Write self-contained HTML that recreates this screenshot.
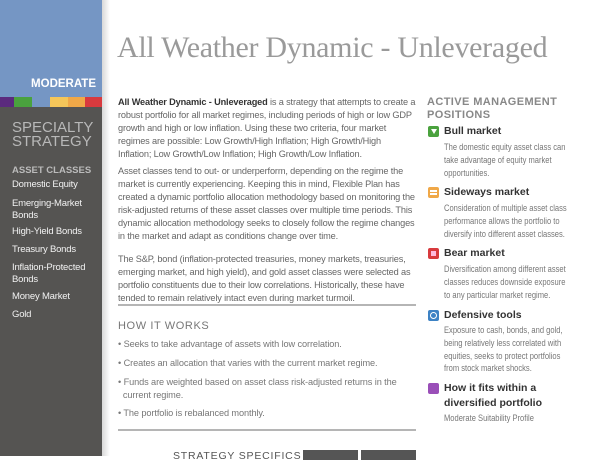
<!DOCTYPE html>
<html><head><meta charset="utf-8"><style>
*{margin:0;padding:0;box-sizing:border-box}
body{width:600px;height:456px;overflow:hidden;background:#fff;position:relative;font-family:"Liberation Sans",sans-serif}
.abs{position:absolute}
#side{left:0;top:0;width:102px;height:456px;background:#555452}
#blue{left:0;top:0;width:102px;height:97px;background:#7596c4}
#shadow{left:102px;top:0;width:8px;height:456px;background:linear-gradient(to right,#d8d8d8,#fff)}
.bar{top:97px;height:10px}
.si{left:12px;color:#f2f2f2;font-size:9.5px;line-height:12px;letter-spacing:-0.2px}
.p{left:118px;width:298px;font-size:9.2px;line-height:13px;color:#666;letter-spacing:-0.15px}
.p b{color:#333}
.rule{left:118px;width:298px;height:2px;background:#b5b5b5}
.r{left:444px;white-space:nowrap;font-size:9px;line-height:12.8px;color:#777;transform:scaleX(0.84);transform-origin:0 0}
.rh{left:444px;font-size:10.5px;font-weight:bold;color:#333}
.ic{left:428px;width:11px;height:11px;border-radius:2px}
.bl{left:118px;font-size:9.2px;color:#777;line-height:13px;width:300px;letter-spacing:-0.1px}
</style></head><body>
<div class="abs" id="side"></div>
<div class="abs" id="blue"></div>
<div class="abs" id="shadow"></div>
<div class="abs" style="left:0;top:78px;width:96px;text-align:right;color:#fff;font-weight:bold;font-size:11.5px">MODERATE</div>
<div class="abs bar" style="left:0;width:14px;background:#5b2a7e"></div>
<div class="abs bar" style="left:14px;width:18px;background:#4aa23e"></div>
<div class="abs bar" style="left:32px;width:18px;background:#7596c4"></div>
<div class="abs bar" style="left:50px;width:18px;background:#f5c65a"></div>
<div class="abs bar" style="left:68px;width:17px;background:#f0a848"></div>
<div class="abs bar" style="left:85px;width:17px;background:#d83a3e"></div>
<div class="abs" style="left:12px;top:121px;color:#b8b8b8;font-size:15px;line-height:14px">SPECIALTY<br>STRATEGY</div>
<div class="abs" style="left:12px;top:165px;color:#bbb;font-size:9.5px;font-weight:bold">ASSET CLASSES</div>
<div class="abs si" style="top:179px">Domestic Equity</div>
<div class="abs si" style="top:198px">Emerging-Market<br>Bonds</div>
<div class="abs si" style="top:226px">High-Yield Bonds</div>
<div class="abs si" style="top:244px">Treasury Bonds</div>
<div class="abs si" style="top:262px">Inflation-Protected<br>Bonds</div>
<div class="abs si" style="top:291px">Money Market</div>
<div class="abs si" style="top:309px">Gold</div>

<div class="abs" style="left:117px;top:31px;font-family:'Liberation Serif',serif;font-size:30px;color:#9a9a9a;letter-spacing:-0.3px;white-space:nowrap">All Weather Dynamic - Unleveraged</div>

<div class="abs p" style="top:96px"><b>All Weather Dynamic - Unleveraged</b> is a strategy that attempts to create a robust portfolio for all market regimes, including periods of high or low GDP growth and high or low inflation. Using these two criteria, four market regimes are possible: Low Growth/High Inflation; High Growth/High Inflation; Low Growth/Low Inflation; High Growth/Low Inflation.</div>
<div class="abs p" style="top:165px">Asset classes tend to out- or underperform, depending on the regime the market is currently experiencing. Keeping this in mind, Flexible Plan has created a dynamic portfolio allocation methodology based on monitoring the risk-adjusted returns of these asset classes over multiple time periods. This dynamic allocation methodology seeks to closely follow the regime changes in the market and adapt as conditions change over time.</div>
<div class="abs p" style="top:253px">The S&amp;P, bond (inflation-protected treasuries, money markets, treasuries, emerging market, and high yield), and gold asset classes were selected as portfolio constituents due to their low correlations. Historically, these have tended to remain relatively intact even during market turmoil.</div>
<div class="abs rule" style="top:304px"></div>
<div class="abs" style="left:118px;top:320px;font-size:11px;color:#777;letter-spacing:0.6px">HOW IT WORKS</div>
<div class="abs bl" style="top:338px">• Seeks to take advantage of assets with low correlation.</div>
<div class="abs bl" style="top:357px">• Creates an allocation that varies with the current market regime.</div>
<div class="abs bl" style="top:376px">• Funds are weighted based on asset class risk-adjusted returns in the<br>&nbsp;&nbsp;current regime.</div>
<div class="abs bl" style="top:407px">• The portfolio is rebalanced monthly.</div>
<div class="abs rule" style="top:429px"></div>
<div class="abs" style="left:173px;top:450px;font-size:10.5px;color:#555;letter-spacing:0.8px">STRATEGY SPECIFICS</div>
<div class="abs" style="left:303px;top:450px;width:55px;height:10px;background:#555"></div>
<div class="abs" style="left:361px;top:450px;width:55px;height:10px;background:#555"></div>

<div class="abs" style="left:427px;top:96px;font-size:11px;font-weight:bold;color:#888;line-height:13px;letter-spacing:0.4px">ACTIVE MANAGEMENT<br>POSITIONS</div>
<div class="abs ic" style="top:126px;background:#4aa23e"><div style="margin:3px auto 0;width:0;height:0;border-left:3.5px solid transparent;border-right:3.5px solid transparent;border-top:5px solid #fff"></div></div>
<div class="abs rh" style="top:125px">Bull market</div>
<div class="abs r" style="top:141px">The domestic equity asset class can<br>take advantage of equity market<br>opportunities.</div>
<div class="abs ic" style="top:187px;background:#f0a848"><div style="margin:3px 2px;height:5px;border-top:2px solid #fff;border-bottom:2px solid #fff"></div></div>
<div class="abs rh" style="top:186px">Sideways market</div>
<div class="abs r" style="top:202px">Consideration of multiple asset class<br>performance allows the portfolio to<br>diversify into different asset classes.</div>
<div class="abs ic" style="top:248px;background:#d83a3e"><div style="margin:3px auto 0;width:5px;height:5px;background:#fbd"></div></div>
<div class="abs rh" style="top:247px">Bear market</div>
<div class="abs r" style="top:263px">Diversification among different asset<br>classes reduces downside exposure<br>to any particular market regime.</div>
<div class="abs ic" style="top:310px;background:#3d82c4"><div style="margin:2px auto 0;width:7px;height:7px;border:1.5px solid #fff;border-radius:50%"></div></div>
<div class="abs rh" style="top:309px">Defensive tools</div>
<div class="abs r" style="top:324px">Exposure to cash, bonds, and gold,<br>being relatively less correlated with<br>equities, seeks to protect portfolios<br>from stock market shocks.</div>
<div class="abs ic" style="top:383px;background:#9a4fb8"></div>
<div class="abs rh" style="top:381px;line-height:15px">How it fits within a<br>diversified portfolio</div>
<div class="abs r" style="top:412px">Moderate Suitability Profile</div>
</body></html>
